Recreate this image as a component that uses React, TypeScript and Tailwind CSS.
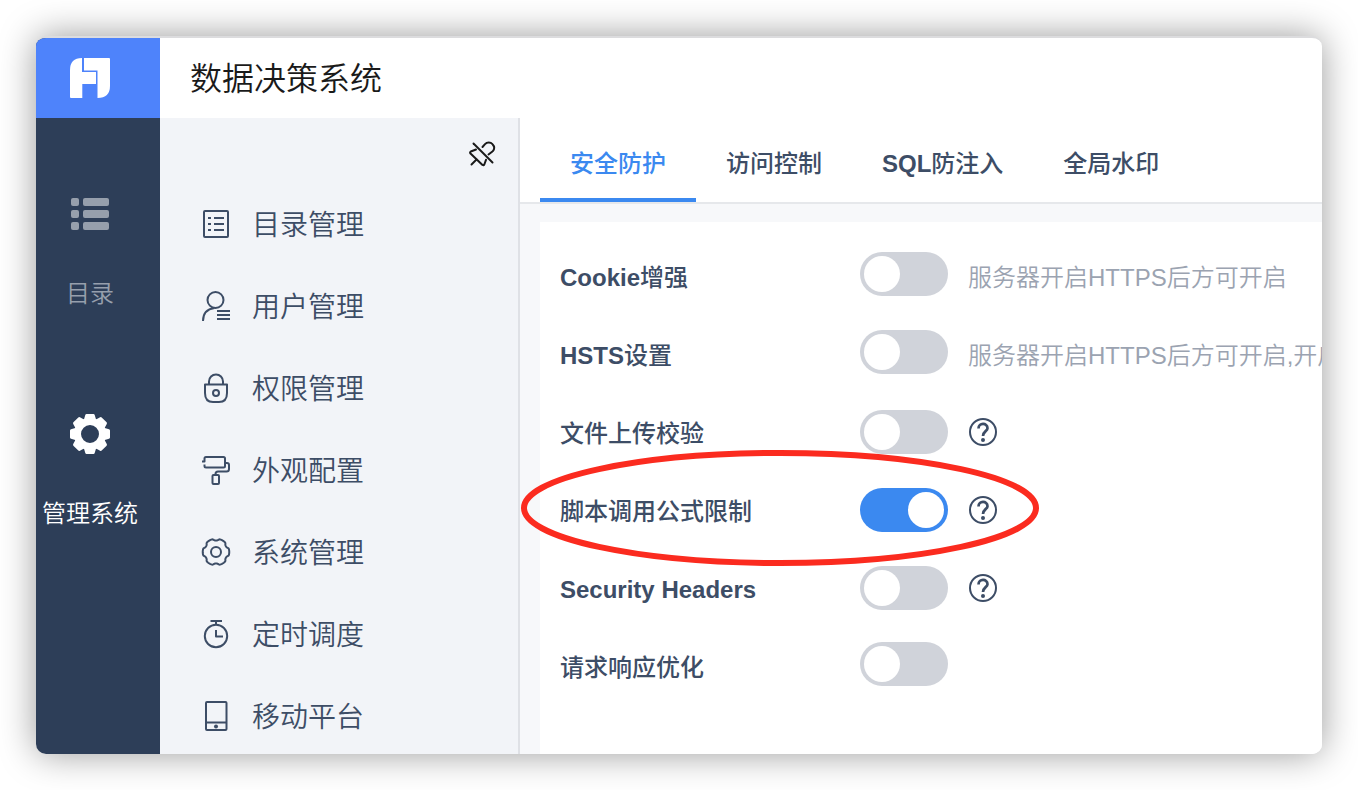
import { useState, type ReactNode } from "react";

const GEAR_OUTLINE =
  Array.from({ length: 120 }, (_, i) => {
    const angle = (i / 120) * Math.PI * 2;
    const r = 12.3 + 0.95 * Math.tanh(2.6 * Math.cos(6 * angle) + 1.2);
    const x = (15 + r * Math.cos(angle)).toFixed(2);
    const y = (15 + r * Math.sin(angle)).toFixed(2);
    return `${i === 0 ? "M" : "L"}${x} ${y}`;
  }).join("") + "Z";

function LineIcon({ children, className = "" }: { children: ReactNode; className?: string }) {
  return (
    <svg
      viewBox="0 0 30 30"
      className={`size-[30px] shrink-0 ${className}`}
      fill="none"
      stroke="currentColor"
      strokeWidth="2"
      strokeLinejoin="round"
      aria-hidden="true"
    >
      {children}
    </svg>
  );
}

const menu: { label: string; icon: ReactNode }[] = [
  {
    label: "目录管理",
    icon: (
      <>
        <rect x="3" y="2" width="24" height="26" rx="1" />
        <path d="M7 9h3M13 9h10M7 15h3M13 15h10M7 21h3M13 21h10" />
      </>
    ),
  },
  {
    label: "用户管理",
    icon: (
      <>
        <circle cx="14.5" cy="9" r="8" />
        <path d="M2 30C2 23 6 18 13.5 17M16 20h13M16 24h13M16 28h13" />
      </>
    ),
  },
  {
    label: "权限管理",
    icon: (
      <>
        <path d="M4 11.500h22v8.500c0 6-3 9-8 9h-6c-5 0-8-3-8-9z" />
        <path d="M8 11V8.500a7 7 0 0 1 14 0V11" />
        <circle cx="15" cy="20" r="3" />
      </>
    ),
  },
  {
    label: "外观配置",
    icon: (
      <>
        <path d="M1 6.500h2.500V3.500Q3.500 2 5 2H22.500Q24 2 24 3.500V11Q24 12.500 22.500 12.500H5Q3.500 12.500 3.500 11V9.500" />
        <path d="M24 8h2Q28 8 28 10V14Q28 16.500 25.500 16.500H17Q14.500 16.500 14.500 19V20" />
        <rect x="11.500" y="20" width="6.500" height="9" rx="1" />
      </>
    ),
  },
  {
    label: "系统管理",
    icon: (
      <>
        <path d={GEAR_OUTLINE} />
        <circle cx="15" cy="15" r="5" />
      </>
    ),
  },
  {
    label: "定时调度",
    icon: (
      <>
        <circle cx="15" cy="17" r="11.200" />
        <path d="M9.500 2h11.500M15 2v4M15 11v6.500h7" />
      </>
    ),
  },
  {
    label: "移动平台",
    icon: (
      <>
        <rect x="5" y="1" width="20.500" height="28" rx="1" />
        <path d="M5 21.500h20.500" />
        <circle cx="15" cy="25.500" r="2" fill="currentColor" stroke="none" />
      </>
    ),
  },
];

const tabs = ["安全防护", "访问控制", "SQL防注入", "全局水印"];

type Setting = { id: string; label: string; on?: boolean; hint?: string; help?: boolean; marked?: boolean };

const settings: Setting[] = [
  { id: "cookie", label: "Cookie增强", hint: "服务器开启HTTPS后方可开启" },
  { id: "hsts", label: "HSTS设置", hint: "服务器开启HTTPS后方可开启,开启" },
  { id: "upload", label: "文件上传校验", help: true },
  { id: "script", label: "脚本调用公式限制", on: true, help: true, marked: true },
  { id: "headers", label: "Security Headers", help: true },
  { id: "request", label: "请求响应优化" },
];

/* Medium weight for Chinese, bold for the Latin words between it. */
function Strong({ text }: { text: string }) {
  const parts = text.split(/([A-Za-z][A-Za-z ]*)/).filter(Boolean);
  return (
    <span className="font-medium">
      {parts.map((part) =>
        /^[A-Za-z]/.test(part) ? (
          <b key={part} className="font-bold">
            {part}
          </b>
        ) : (
          part
        ),
      )}
    </span>
  );
}

function Logo() {
  return (
    <svg viewBox="0 0 40 40" className="size-10" fill="white" aria-hidden="true">
      <path d="M0 12Q0 0 12 0V14H26V26H12.300V40H1Q0 40 0 39Z" />
      <path d="M14 0H39Q40 0 40 1V28Q40 40 27.500 40V12.500H14Z" />
    </svg>
  );
}

function ListIcon() {
  return (
    <svg viewBox="0 0 40 40" className="size-10" fill="currentColor" aria-hidden="true">
      {[4, 16, 28].map((y) => (
        <g key={y}>
          <rect x="1" y={y} width="8" height="8" rx="2" />
          <rect x="13" y={y} width="26" height="8" rx="2" />
        </g>
      ))}
    </svg>
  );
}

function GearIcon() {
  return (
    <svg viewBox="-20 -20 40 40" className="size-10" fill="currentColor" aria-hidden="true">
      <circle r="12.500" fill="none" stroke="currentColor" strokeWidth="7" />
      {[0, 45, 90, 135, 180, 225, 270, 315].map((turn) => (
        <path key={turn} transform={`rotate(${turn})`} d="M-6.500-13L-4.700-19Q-4.400-20-3.500-20H3.500Q4.400-20 4.700-19L6.500-13Z" />
      ))}
    </svg>
  );
}

function SettingRow({ id, label, on = false, hint, help, marked }: Setting) {
  const [checked, setChecked] = useState(on);
  return (
    <li className="relative flex h-[78px] items-center pl-5">
      <label htmlFor={id} className="w-[300px] shrink-0 pt-2">
        <Strong text={label} />
      </label>
      <div className={`flex min-w-0 items-center gap-5 ${help ? "pt-1" : ""}`}>
        <input
          id={id}
          type="checkbox"
          role="switch"
          checked={checked}
          onChange={() => setChecked(!checked)}
          className="h-11 w-[88px] shrink-0 cursor-pointer appearance-none rounded-full bg-[#d0d3da] p-1 before:block before:size-9 before:rounded-full before:bg-white checked:bg-[#3b89f0] checked:before:ml-11"
        />
        {hint && <span className="overflow-hidden pt-2 whitespace-nowrap text-[#9ba3b1]">{hint}</span>}
        {help && (
          <button type="button" aria-label="帮助">
            <LineIcon>
              <circle cx="15" cy="15" r="13" />
              <path strokeWidth="2.700" d="M10.500 11.500C10.500 5.500 19.500 5.500 19.500 11.200C19.500 14.200 15 14.300 15 19" />
              <circle cx="15" cy="22.900" r="2" fill="currentColor" stroke="none" />
            </LineIcon>
          </button>
        )}
      </div>
      {marked && (
        <svg
          viewBox="0 0 520 120"
          className="pointer-events-none absolute top-1/2 -left-5 h-[120px] w-[520px] -translate-y-1/2"
          fill="none"
          stroke="#fb2b1f"
          strokeWidth="6"
          aria-hidden="true"
        >
          <ellipse cx="260" cy="60" rx="256" ry="55" />
        </svg>
      )}
    </li>
  );
}

export default function App() {
  const [tab, setTab] = useState(tabs[0]);
  return (
    <div className="flex min-h-screen bg-white p-9 font-['Liberation_Sans','Noto_Sans_CJK_SC',sans-serif] text-2xl leading-8 font-[350] text-[#3d4d66]">
      <div className="flex min-w-0 flex-1 overflow-hidden rounded-[10px] border-t-2 border-[#dcdcde] bg-white shadow-[0_0_36px_rgba(0,0,0,0.4)]">
        <nav className="flex w-[124px] shrink-0 flex-col bg-[#2d3e58]">
          <a href="#home" aria-label="首页" className="flex h-20 items-center justify-center bg-[#4e83fb] pr-4">
            <Logo />
          </a>
          <div className="flex flex-col gap-[104px] pt-[76px] pr-4">
            <button type="button" className="flex flex-col items-center gap-11 text-[#969fac]">
              <ListIcon />
              <span className="whitespace-nowrap">目录</span>
            </button>
            <button type="button" className="flex flex-col items-center gap-11 text-white">
              <GearIcon />
              <span className="whitespace-nowrap">管理系统</span>
            </button>
          </div>
        </nav>

        <div className="flex min-w-0 flex-1 flex-col">
          <header className="flex h-20 shrink-0 items-center px-[30px] pt-0.5">
            <h1 className="text-[32px] leading-10 text-[#1a1a1a]">数据决策系统</h1>
          </header>

          <div className="flex min-h-0 flex-1">
            <aside className="w-[360px] shrink-0 border-r-2 border-[#dfe1e6] bg-[#f2f4f8] pt-[21px] pb-2">
              <div className="flex justify-end pr-[21px]">
                <button type="button" aria-label="取消固定" className="text-[#1a1a1a]">
                  <LineIcon>
                    <g strokeLinecap="round">
                      <path d="M6.500 4.500L25.500 23.500" />
                      <path d="M15.500 8L18 5.200C20 3 23.500 3 25.500 5.200C27.700 7.400 27.800 10.300 25.700 12.300L21.500 15.500" />
                      <path d="M9 10.500L3.800 12.500Q2.500 13.300 3.500 14.500L15.500 26Q16.700 26.800 17.300 25.500L19 20.800" />
                      <path d="M9.500 20.500L4.500 25.500" />
                    </g>
                  </LineIcon>
                </button>
              </div>
              <ul className="flex flex-col gap-[26px] pt-[27px]">
                {menu.map((item) => (
                  <li key={item.label}>
                    <a href={`#${item.label}`} className="flex h-14 items-center gap-[21px] pl-[41px] text-[28px]">
                      <LineIcon>{item.icon}</LineIcon>
                      <span className="pt-1">{item.label}</span>
                    </a>
                  </li>
                ))}
              </ul>
            </aside>

            <main className="flex min-w-0 flex-1 flex-col bg-[#f7f8fa]">
              <div role="tablist" className="flex h-[86px] shrink-0 border-b-2 border-[#e6e8eb] bg-white pl-5">
                {tabs.map((name) => (
                  <button
                    key={name}
                    type="button"
                    role="tab"
                    aria-selected={tab === name}
                    onClick={() => setTab(name)}
                    className={`border-b-4 px-[30px] pt-3 whitespace-nowrap ${
                      tab === name ? "border-[#3b89f0] text-[#3b89f0]" : "border-transparent"
                    }`}
                  >
                    <Strong text={name} />
                  </button>
                ))}
              </div>
              <ul className="mt-[18px] ml-5 flex-1 bg-white pt-[13px]">
                {settings.map((s) => (
                  <SettingRow key={s.id} {...s} />
                ))}
              </ul>
            </main>
          </div>
        </div>
      </div>
    </div>
  );
}
